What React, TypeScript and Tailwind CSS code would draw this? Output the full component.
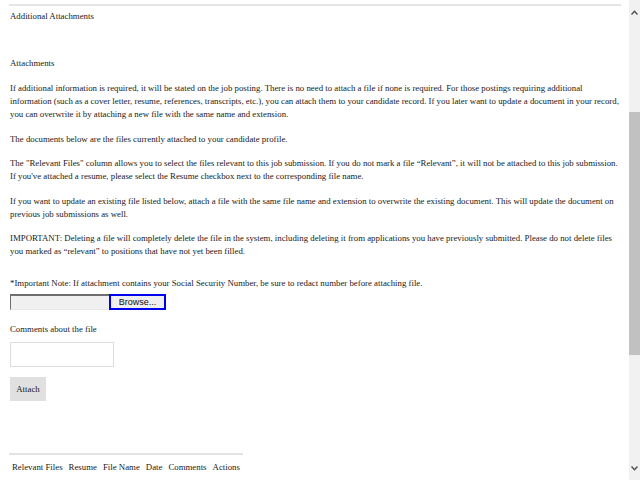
import React from 'react';

const paragraphs = [
  'If additional information is required, it will be stated on the job posting. There is no need to attach a file if none is required. For those postings requiring additional information (such as a cover letter, resume, references, transcripts, etc.), you can attach them to your candidate record. If you later want to update a document in your record, you can overwrite it by attaching a new file with the same name and extension.',
  'The documents below are the files currently attached to your candidate profile.',
  'The "Relevant Files" column allows you to select the files relevant to this job submission. If you do not mark a file \u201cRelevant\u201d, it will not be attached to this job submission. If you\'ve attached a resume, please select the Resume checkbox next to the corresponding file name.',
  'If you want to update an existing file listed below, attach a file with the same file name and extension to overwrite the existing document. This will update the document on previous job submissions as well.',
  'IMPORTANT: Deleting a file will completely delete the file in the system, including deleting it from applications you have previously submitted. Please do not delete files you marked as \u201crelevant\u201d to positions that have not yet been filled.',
];

const columns = ['Relevant Files', 'Resume', 'File Name', 'Date', 'Comments', 'Actions'];

function Scrollbar() {
  return (
    <div className="flex w-[11px] shrink-0 flex-col bg-[#f1f1f1]">
      <div className="flex h-[24px] items-center justify-center">
        <svg width="7" height="5" viewBox="0 0 7 5">
          <path d="M0.5 4.5 L3.5 1.2 L6.5 4.5" fill="none" stroke="#505050" strokeWidth="1.4" />
        </svg>
      </div>
      <div className="h-[88px]" />
      <div className="h-[243px] bg-[#c1c1c1]" />
      <div className="flex-1" />
      <div className="flex h-[24px] items-center justify-center">
        <svg width="7" height="5" viewBox="0 0 7 5">
          <path d="M0.5 0.5 L3.5 3.8 L6.5 0.5" fill="none" stroke="#505050" strokeWidth="1.4" />
        </svg>
      </div>
    </div>
  );
}

export default function App() {
  return (
    <div className="flex h-[480px] w-[640px] overflow-hidden bg-white text-[#1a1a1a] [font-family:'Liberation_Serif',serif]">
      <main className="flex-1 pl-[9px] pr-[8px] pt-[4px] text-[8.8px] leading-[13px]">
        <section className="border-t-2 border-[#e5e5e5] pt-[4px]">
          <h2 className="pl-[1px] font-normal">Additional Attachments</h2>
        </section>

        <div className="pl-[1px] pt-[34px]">
          <h3 className="font-normal">Attachments</h3>
          <div className="mt-[12px] flex flex-col gap-[11.5px]">
            {paragraphs.map((p, i) => (
              <p key={i}>{p}</p>
            ))}
          </div>

          <p className="mt-[19px]">
            *Important Note: If attachment contains your Social Security Number, be sure to redact number before attaching file.
          </p>

          {/* file input */}
          <div className="mt-[4px] flex h-[16px] items-stretch">
            <div className="w-[99px] border-t-2 border-l border-b border-r-0 border-t-[#6e6e6e] border-l-[#6e6e6e] border-b-[#e8e8e8] bg-[#f0f0f0]" />
            <button className="flex w-[57px] items-center justify-center border-2 border-[#0000ee] bg-[#efefef] text-[9px] leading-none text-[#111] [font-family:'Liberation_Sans',sans-serif]">
              Browse...
            </button>
          </div>

          <p className="mt-[13px]">Comments about the file</p>
          <textarea className="mt-[6px] block h-[25px] w-[104px] resize-none border border-[#dcdcdc] bg-white" />

          <button className="mt-[10px] block h-[24px] w-[36px] bg-[#e0e0e0] text-[8.8px] text-[#1a1a1a]">
            Attach
          </button>

          <table className="mt-[52px] ml-[-1px] border-t-2 border-[#e3e3e3] border-collapse">
            <thead>
              <tr>
                {columns.map((c) => (
                  <th key={c} className="px-[3px] pt-[6px] font-normal">
                    {c}
                  </th>
                ))}
              </tr>
            </thead>
          </table>
        </div>
      </main>
      <Scrollbar />
    </div>
  );
}
